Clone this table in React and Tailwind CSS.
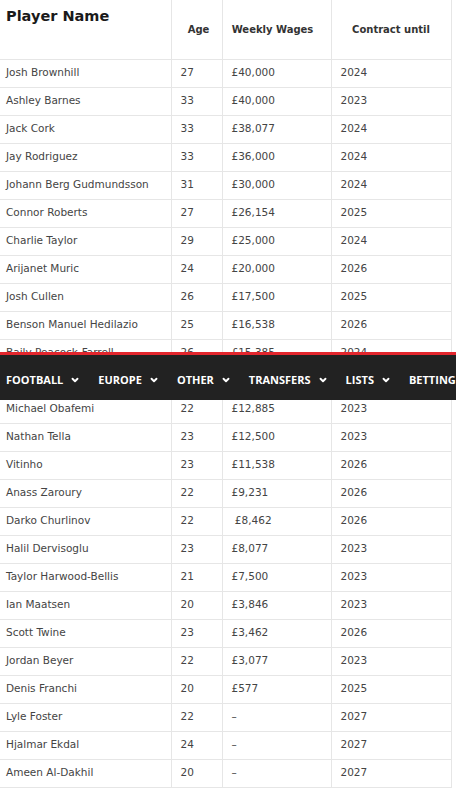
import { ChevronDown } from "lucide-react";

const players = [
  ["Josh Brownhill", 27, "£40,000", 2024],
  ["Ashley Barnes", 33, "£40,000", 2023],
  ["Jack Cork", 33, "£38,077", 2024],
  ["Jay Rodriguez", 33, "£36,000", 2024],
  ["Johann Berg Gudmundsson", 31, "£30,000", 2024],
  ["Connor Roberts", 27, "£26,154", 2025],
  ["Charlie Taylor", 29, "£25,000", 2024],
  ["Arijanet Muric", 24, "£20,000", 2026],
  ["Josh Cullen", 26, "£17,500", 2025],
  ["Benson Manuel Hedilazio", 25, "£16,538", 2026],
  ["Baily Peacock-Farrell", 26, "£15,385", 2024],
  ["Samuel Bastien", 26, "£13,462", 2024],
  ["Michael Obafemi", 22, "£12,885", 2023],
  ["Nathan Tella", 23, "£12,500", 2023],
  ["Vitinho", 23, "£11,538", 2026],
  ["Anass Zaroury", 22, "£9,231", 2026],
  ["Darko Churlinov", 22, " £8,462", 2026],
  ["Halil Dervisoglu", 23, "£8,077", 2023],
  ["Taylor Harwood-Bellis", 21, "£7,500", 2023],
  ["Ian Maatsen", 20, "£3,846", 2023],
  ["Scott Twine", 23, "£3,462", 2026],
  ["Jordan Beyer", 22, "£3,077", 2023],
  ["Denis Franchi", 20, "£577", 2025],
  ["Lyle Foster", 22, "–", 2027],
  ["Hjalmar Ekdal", 24, "–", 2027],
  ["Ameen Al-Dakhil", 20, "–", 2027],
];

const menu = ["Football", "Europe", "Other", "Transfers", "Lists", "Betting"];

export default function App() {
  return (
    <div className="relative w-[456px] h-[800px] overflow-hidden bg-white font-['DejaVu_Sans',Verdana,sans-serif]">
      <table className="w-[451px] border-collapse table-fixed">
        <colgroup>
          <col className="w-[171px]" />
          <col className="w-[51px]" />
          <col className="w-[109px]" />
          <col className="w-[120px]" />
        </colgroup>
        <thead>
          <tr className="h-[59px] border-b border-[#e6e6e6]">
            <th className="align-top text-left pl-[6px] pt-[6px] text-[14.5px] font-bold text-[#1a1a1a] border-r border-[#e6e6e6]">
              Player Name
            </th>
            <th className="text-[10px] font-bold text-[#333] border-r border-[#e6e6e6] pl-1">
              Age
            </th>
            <th className="text-[10px] font-bold text-[#333] border-r border-[#e6e6e6] pr-2">
              Weekly Wages
            </th>
            <th className="text-[10px] font-bold text-[#333] border-r border-[#e6e6e6]">
              Contract until
            </th>
          </tr>
        </thead>
        <tbody>
          {players.map(([name, age, wage, until]) => (
            <tr key={name} className="h-[28px] border-b border-[#e6e6e6] text-[10.5px] text-[#444]">
              <td className="pl-[6px] border-r border-[#e6e6e6] whitespace-nowrap">{name}</td>
              <td className="pl-[9px] border-r border-[#e6e6e6]">{age}</td>
              <td className="pl-[9px] border-r border-[#e6e6e6] whitespace-pre">{wage}</td>
              <td className="pl-[9px] border-r border-[#e6e6e6]">{until}</td>
            </tr>
          ))}
        </tbody>
      </table>

      <nav className="absolute left-0 top-[352px] w-full h-[48px] border-t-[3px] border-[#e3262d] bg-[#222222] flex items-center pl-[6px] pt-[5px] gap-[18px] whitespace-nowrap font-['Open_Sans',sans-serif] text-[11px] font-bold text-white uppercase">
        {menu.map((item, i) => (
          <span key={item} className="flex items-center gap-[7px] shrink-0">
            {item}
            {i < menu.length - 1 && <ChevronDown size={10} strokeWidth={4.5} />}
          </span>
        ))}
      </nav>
    </div>
  );
}
